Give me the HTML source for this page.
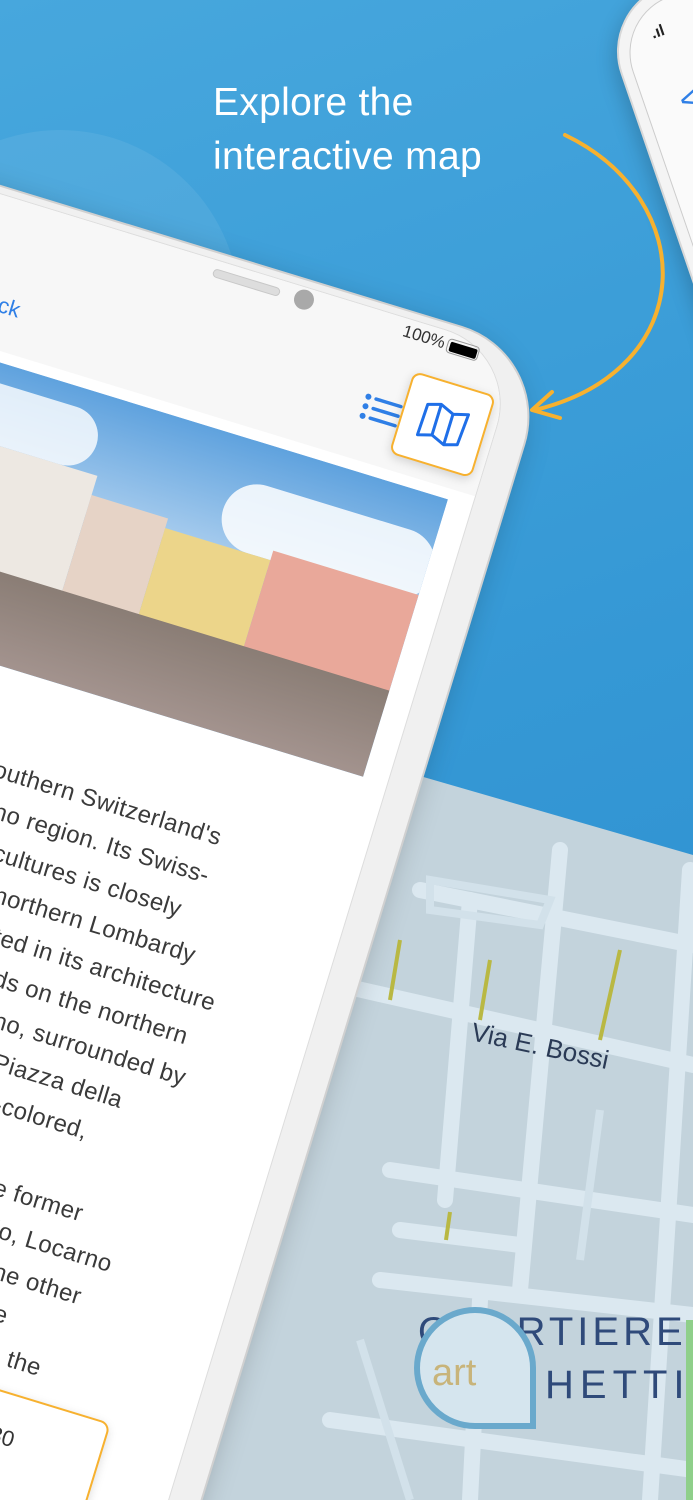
<!DOCTYPE html>
<html><head><meta charset="utf-8"><style>
*{margin:0;padding:0;box-sizing:border-box}
html,body{width:693px;height:1500px;overflow:hidden}
body{font-family:"Liberation Sans",sans-serif}
#root{position:relative;width:693px;height:1500px;overflow:hidden;background:linear-gradient(160deg,#47a7dd 0%,#3598d5 50%,#2a8bcd 100%)}
.abs{position:absolute}
.title{left:213px;top:76px;color:#fff;font-size:39px;line-height:54px;letter-spacing:0.3px}
.phone{left:-300px;top:93px;width:892px;height:1500px;transform:rotate(17deg);transform-origin:0 0;background:#f0f0f0;border-radius:95px;border:2px solid #d0d0d0;box-shadow:-6px 10px 30px rgba(0,0,0,.25)}
.screen{position:absolute;left:14px;top:6px;right:30px;bottom:14px;border-radius:78px;background:#fff;overflow:hidden;border:1px solid #ddd}
.nav{position:absolute;left:0;top:0;right:0;height:150px;background:#f7f7f7}
.t{position:absolute;font-size:24px;color:#3a3a3a;white-space:nowrap;letter-spacing:.4px}
.phone2{left:598px;top:8px;width:400px;height:600px;transform:rotate(-19deg);transform-origin:0 0;background:#f4f4f4;border-radius:70px;border:2px solid #d8d8d8;box-shadow:-4px 6px 20px rgba(0,0,0,.2)}
</style></head><body><div id="root">

<div class="abs" style="left:-120px;top:130px;width:360px;height:360px;border-radius:50%;background:rgba(255,255,255,.07)"></div>

<svg class="abs" style="left:0;top:0" width="693" height="1500">
<defs><clipPath id="mc"><polygon points="420,776 693,855 693,1500 150,1500"/></clipPath></defs>
<g clip-path="url(#mc)">
<rect width="693" height="1500" fill="#c3d3dc"/>
<g stroke="#dbe8f0" stroke-width="16" fill="none" stroke-linecap="round">
<path d="M340,985 L693,1065"/>
<path d="M380,1280 L693,1315"/>
<path d="M560,850 L520,1290"/>
<path d="M470,900 L445,1200"/>
<path d="M690,870 L650,1500"/>
<path d="M420,890 L693,945"/>
<path d="M390,1170 L693,1215"/>
<path d="M400,1230 L520,1245"/>
<path d="M330,1420 L693,1470"/>
<path d="M480,1300 L470,1500"/>
</g>
<g stroke="#d2e1ea" stroke-width="8" fill="none">
<path d="M430,880 L550,900 L540,925 L430,910 Z"/>
<path d="M600,1110 L580,1260"/>
<path d="M360,1340 L410,1500"/>
</g>
<g stroke="#b9b843" stroke-width="4" fill="none">
<path d="M400,940 L390,1000"/><path d="M490,960 L480,1020"/><path d="M620,950 L600,1040"/><path d="M450,1212 L446,1240"/>
</g>
<rect x="686" y="1320" width="10" height="180" fill="#8fcf8a"/>
<text x="470" y="1040" font-family="Liberation Sans,sans-serif" font-size="26" fill="#2a3a55" transform="rotate(12 470 1040)">Via E. Bossi</text>
<text x="418" y="1345" font-family="Liberation Sans,sans-serif" font-size="40" letter-spacing="4" fill="#2f4a7a">QUARTIERE</text>
<text x="545" y="1398" font-family="Liberation Sans,sans-serif" font-size="40" letter-spacing="6" fill="#2f4a7a">HETTI</text>
<path d="M475,1310 a58,58 0 1 0 0,116 h58 v-58 a58,58 0 0 0 -58,-58 z" fill="#d5e5ee" stroke="#6aa9cc" stroke-width="6"/>
<text x="432" y="1385" font-family="Liberation Sans,sans-serif" font-size="38" fill="#c8b47a">art</text>
</g>
</svg>

<div class="abs phone2"><div style="position:absolute;left:10px;top:10px;right:10px;bottom:10px;border-radius:60px;background:#fafafa;border:1px solid #ccc"></div>
<div style="position:absolute;left:40px;top:32px;font-size:16px;font-weight:bold;color:#222">.ıl</div>
<div style="position:absolute;left:45px;top:95px;font-size:34px;color:#2f7fe6">&lt;</div>
</div>

<div class="abs title">Explore the<br>interactive map</div>

<div class="abs phone">
 <div class="screen">
  <div class="nav"></div>
 </div>
 <div style="position:absolute;left:541px;top:15px;width:70px;height:9px;border-radius:5px;background:#ddd;border:1px solid #c8c8c8"></div>
 <div style="position:absolute;left:626px;top:9px;width:20px;height:20px;border-radius:50%;background:#a9a9a9"></div>
 <div style="position:absolute;left:740px;top:10px;font-size:17px;color:#333">100%</div>
 <div style="position:absolute;left:786px;top:13px;width:33px;height:15px;border:1.5px solid #999;border-radius:4px;padding:1.5px"><div style="width:100%;height:100%;background:#000;border-radius:2px"></div></div>
 <div style="position:absolute;left:305px;top:100px;font-size:22px;color:#2f7fe6">‹ Back</div>
 <svg style="position:absolute;left:722px;top:88px" width="40" height="32"><g fill="#2f7fe6"><circle cx="4" cy="5" r="3"/><circle cx="4" cy="15" r="3"/><circle cx="4" cy="25" r="3"/></g><g stroke="#2f7fe6" stroke-width="3.5" stroke-linecap="round"><path d="M12,5H38M12,15H38M12,25H38"/></g></svg>
 <div style="position:absolute;left:762px;top:55px;width:86px;height:86px;background:#fff;border:2.5px solid #f7b12f;border-radius:9px;box-shadow:0 3px 10px rgba(0,0,0,.15)">
  <svg style="position:absolute;left:18px;top:20px" width="48" height="44"><path d="M3,6 L16,2 L30,8 L45,4 L43,36 L30,40 L16,34 L2,38 Z M16,2 L16,34 M30,8 L30,40" stroke="#1f6fe8" stroke-width="3" fill="none" stroke-linejoin="round"/></svg>
 </div>
 <div style="position:absolute;left:200px;top:168px;width:632px;height:290px;overflow:hidden;background:#7db4e4">
  <div style="position:absolute;left:0;top:0;width:100%;height:120px;background:linear-gradient(180deg,#5fa2de,#a9cdee)"></div>
  <div style="position:absolute;left:80px;top:20px;width:200px;height:60px;border-radius:40px;background:rgba(255,255,255,.8)"></div>
  <div style="position:absolute;left:420px;top:40px;width:220px;height:70px;border-radius:40px;background:rgba(255,255,255,.85)"></div>
  <div style="position:absolute;left:0;top:100px;width:100px;height:120px;background:#d98a7a"></div>
  <div style="position:absolute;left:100px;top:80px;width:190px;height:140px;background:#ede8e2"></div>
  <div style="position:absolute;left:290px;top:100px;width:80px;height:120px;background:#e6d3c6"></div>
  <div style="position:absolute;left:370px;top:110px;width:110px;height:110px;background:#ecd58a"></div>
  <div style="position:absolute;left:480px;top:100px;width:152px;height:120px;background:#e9a89a"></div>
  <div style="position:absolute;left:0;top:200px;width:100%;height:90px;background:linear-gradient(180deg,#8a7d75,#a3938e)"></div>
 </div>
 <div class="t" style="left:477px;top:545px">outhern Switzerland's</div>
 <div class="t" style="left:489px;top:585px">no region. Its Swiss-</div>
 <div class="t" style="left:501px;top:625px">cultures is closely</div>
 <div class="t" style="left:514px;top:665px">northern Lombardy</div>
 <div class="t" style="left:526px;top:705px">ted in its architecture</div>
 <div class="t" style="left:538px;top:745px">ds on the northern</div>
 <div class="t" style="left:550px;top:785px">no, surrounded by</div>
 <div class="t" style="left:562px;top:825px">Piazza della</div>
 <div class="t" style="left:575px;top:865px">-colored,</div>
 <div class="t" style="left:599px;top:945px">e former</div>
 <div class="t" style="left:611px;top:985px">io, Locarno</div>
 <div class="t" style="left:623px;top:1025px">he other</div>
 <div class="t" style="left:636px;top:1065px">e</div>
 <div class="t" style="left:648px;top:1105px">, the</div>
 <div style="position:absolute;left:300px;top:1150px;width:480px;height:140px;background:#fff;border:2.5px solid #f7b12f;border-radius:10px;box-shadow:0 3px 10px rgba(0,0,0,.15)">
  <div style="position:absolute;left:335px;top:30px;font-size:22px;color:#333">02:30</div>
 </div>
</div>

<svg class="abs" style="left:0;top:0" width="693" height="500">
<path d="M565,135 C700,200 700,370 535,410" stroke="#f7b12f" stroke-width="4" fill="none" stroke-linecap="round"/>
<path d="M552,392 L532,410 L560,418" stroke="#f7b12f" stroke-width="4" fill="none" stroke-linecap="round" stroke-linejoin="round"/>
</svg>

</div></body></html>
